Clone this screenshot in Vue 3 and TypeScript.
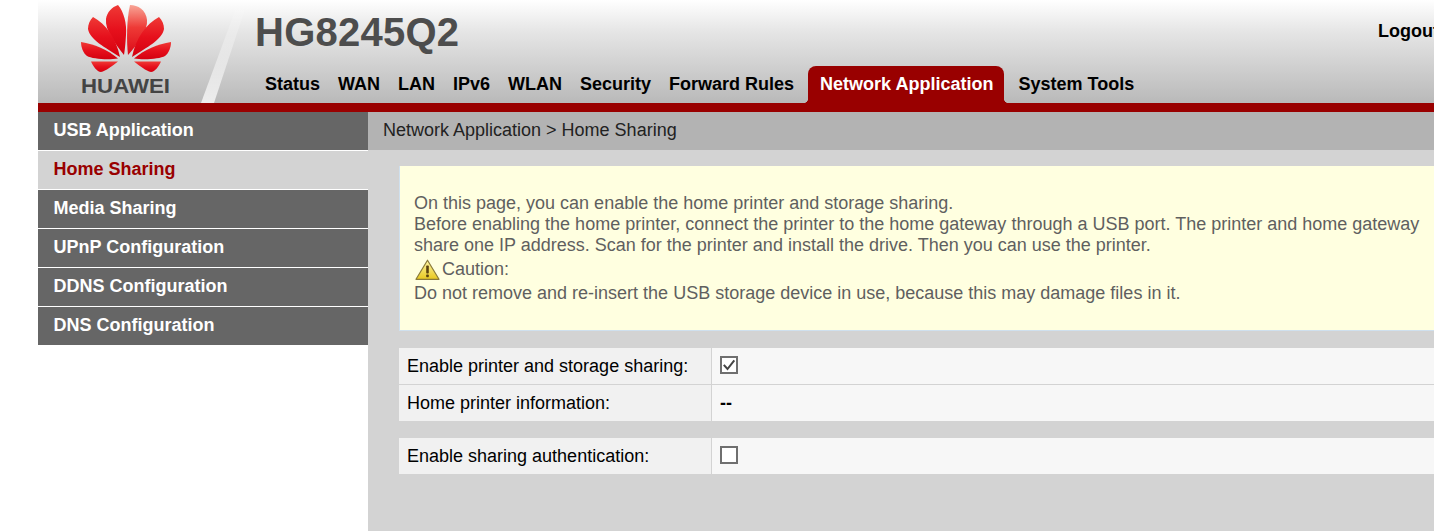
<script setup lang="ts">
const tabs: string[] = ['Status', 'WAN', 'LAN', 'IPv6', 'WLAN', 'Security', 'Forward Rules', 'Network Application', 'System Tools']
const menu: string[] = ['USB Application', 'Home Sharing', 'Media Sharing', 'UPnP Configuration', 'DDNS Configuration', 'DNS Configuration']
const activeTab = 'Network Application'
const activeMenu = 'Home Sharing'
</script>

<template>
  <div class="page">
    <header class="header">
      <svg class="slash" width="60" height="103" viewBox="0 0 60 103" aria-hidden="true">
        <defs>
          <linearGradient id="slashFill" x1="0" y1="1" x2="0" y2="0">
            <stop offset="0" stop-color="#fff" stop-opacity="0.75" />
            <stop offset="1" stop-color="#fff" stop-opacity="0" />
          </linearGradient>
        </defs>
        <polygon points="0,103 13,103 47,0 38,0" fill="url(#slashFill)" />
      </svg>
      <div class="logo">
        <svg width="110" height="103" viewBox="70 0 110 103" aria-label="HUAWEI">
          <defs>
            <linearGradient id="petal" x1="0" y1="0" x2="0" y2="1">
              <stop offset="0" stop-color="#ef3a36" />
              <stop offset="0.5" stop-color="#e6101c" />
              <stop offset="1" stop-color="#d4000f" />
            </linearGradient>
            <linearGradient id="petalTop" x1="0" y1="0" x2="0" y2="1">
              <stop offset="0" stop-color="#f8a596" />
              <stop offset="0.45" stop-color="#ee3a36" />
              <stop offset="1" stop-color="#dc0a18" />
            </linearGradient>
          </defs>
          <path d="M124 55 C114 42 105 30 106 19 C107 12 112 7 118 5 C124 12 127 24 126 35 C125.500 43 125 49 124 55Z" fill="url(#petal)" />
          <path d="M128 55 C126.500 42 126.500 20 130 5 C138 5 146 10 147 20 C148 30 138 44 128 55Z" fill="url(#petalTop)" />
          <path d="M120 57 C105 47 90 40 88 29 C88 24 90 20 93 17 C106 24 116 38 120 57Z" fill="url(#petal)" />
          <path d="M132 57 C136 38 146 24 159 17 C162 20 164 24 164 29 C162 40 147 47 132 57Z" fill="url(#petal)" />
          <path d="M118 58.500 C108 60 92 59 87 56 C83 53 81 47 81 42 C94 44 108 50 118 58.500Z" fill="url(#petal)" />
          <path d="M134 58.500 C144 60 160 59 165 56 C169 53 171 47 171 42 C158 44 144 50 134 58.500Z" fill="url(#petal)" />
          <path d="M91 61.500 H118 C112 66 106 71 101 72 C97 72 93 66 91 61.500Z" fill="url(#petal)" />
          <path d="M134 61.500 H161 C159 66 155 72 151 72 C146 71 140 66 134 61.500Z" fill="url(#petal)" />
          <text class="brand" x="81" y="93" textLength="89" lengthAdjust="spacingAndGlyphs">HUAWEI</text>
        </svg>
      </div>
      <div class="head-main">
        <div class="title-row">
          <h1 class="model">HG8245Q2</h1>
          <a class="logout">Logout</a>
        </div>
        <nav class="tabs">
          <a v-for="tab in tabs" :key="tab" class="tab" :class="{ 'tab-active': tab === activeTab }">{{ tab }}</a>
        </nav>
      </div>
    </header>
    <div class="redbar"></div>
    <div class="body">
      <aside class="side">
        <a v-for="item in menu" :key="item" class="side-item" :class="{ 'side-active': item === activeMenu }">{{ item }}</a>
      </aside>
      <main class="content">
        <div class="crumb">Network Application &gt; Home Sharing</div>
        <div class="panel">
          <section class="notice">
            <p>On this page, you can enable the home printer and storage sharing.</p>
            <p>Before enabling the home printer, connect the printer to the home gateway through a USB port. The printer and home gateway share one IP address. Scan for the printer and install the drive. Then you can use the printer.</p>
            <div class="caution">
              <svg width="25" height="22" viewBox="0 0 25 22" aria-hidden="true">
                <defs>
                  <linearGradient id="warn" x1="0" y1="0" x2="0" y2="1">
                    <stop offset="0" stop-color="#fff6a8" />
                    <stop offset="1" stop-color="#e8c81e" />
                  </linearGradient>
                </defs>
                <path d="M12.500 1.200 L24 20.300 H1 Z" fill="url(#warn)" stroke="#8a7a3a" stroke-width="1.200" stroke-linejoin="round" />
                <rect x="11.200" y="6.500" width="2.600" height="8" rx="0.800" fill="#5a4210" />
                <rect x="11.200" y="15.600" width="2.600" height="2.600" rx="0.600" fill="#5a4210" />
              </svg>
              <span>Caution:</span>
            </div>
            <p>Do not remove and re-insert the USB storage device in use, because this may damage files in it.</p>
          </section>
          <div class="form-table">
            <div class="row">
              <div class="label">Enable printer and storage sharing:</div>
              <div class="value">
                <span class="check">
                  <svg width="14" height="14" viewBox="0 0 14 14" aria-hidden="true"><path d="M1.800 6.800 L5.500 11 L12.300 2.300" fill="none" stroke="#444" stroke-width="2" /></svg>
                </span>
              </div>
            </div>
            <div class="row">
              <div class="label">Home printer information:</div>
              <div class="value dash">--</div>
            </div>
          </div>
          <div class="form-table">
            <div class="row">
              <div class="label">Enable sharing authentication:</div>
              <div class="value"><span class="check"></span></div>
            </div>
          </div>
        </div>
      </main>
    </div>
  </div>
</template>

<style scoped>
.page {
  width: 1480px;
  min-height: 531px;
  box-sizing: border-box;
  padding-left: 38px;
  display: flex;
  flex-direction: column;
  background: #fff;
  font-family: "Liberation Sans", Arial, sans-serif;
  font-size: 18px;
  color: #000;
}
.header {
  position: relative;
  height: 103px;
  display: flex;
  background: linear-gradient(#fff 0%, #e6e6e6 30%, #b9b9b9 100%);
}
.slash {
  position: absolute;
  left: 163px;
  top: 0;
}
.logo {
  width: 217px;
  padding-left: 32px;
  box-sizing: border-box;
  flex: none;
}
.logo svg { display: block; }
.brand {
  font-family: "Liberation Sans", Arial, sans-serif;
  font-size: 19.500px;
  font-weight: bold;
  fill: #444;
}
.head-main {
  flex: 1;
  display: flex;
  flex-direction: column;
  min-width: 0;
}
.title-row {
  height: 66px;
  display: flex;
  justify-content: space-between;
  padding-right: 41px;
}
.model {
  margin: 9px 0 0;
  font-size: 40px;
  letter-spacing: 0.250px;
  line-height: 46px;
  font-weight: bold;
  color: #4d4d4d;
}
.logout {
  margin-top: 21px;
  font-weight: bold;
  line-height: 21px;
}
.tabs {
  height: 37px;
  display: flex;
  gap: 18px;
  padding-left: 10px;
}
.tab {
  font-weight: bold;
  line-height: 36px;
  white-space: nowrap;
}
.tab-active {
  position: relative;
  margin: 0 -4px;
  padding: 0 11px 0 12px;
  color: #fff;
  background: #990000;
  border-radius: 8px 8px 0 0;
}
.tab-active::before,
.tab-active::after {
  content: "";
  position: absolute;
  bottom: 0;
  width: 5px;
  height: 5px;
}
.tab-active::before {
  left: -5px;
  background: radial-gradient(circle at 0 0, transparent 5px, #990000 5.500px);
}
.tab-active::after {
  right: -5px;
  background: radial-gradient(circle at 100% 0, transparent 5px, #990000 5.500px);
}
.redbar {
  height: 9px;
  background: #990000;
}
.body {
  flex: 1;
  display: flex;
}
.side {
  width: 330px;
  flex: none;
  display: flex;
  flex-direction: column;
  background: #fff;
}
.side-item {
  height: 38px;
  line-height: 36px;
  padding-left: 15.500px;
  margin-bottom: 1px;
  font-weight: bold;
  color: #fff;
  background: #666;
}
.side-active {
  color: #990000;
  background: #d3d3d3;
}
.content {
  flex: 1;
  min-width: 0;
  background: #d3d3d3;
}
.crumb {
  height: 38px;
  line-height: 36px;
  padding-left: 15px;
  background: #b3b3b3;
  color: #222;
}
.panel {
  padding: 16px 0 0 31px;
}
.notice {
  box-sizing: border-box;
  height: 165px;
  padding: 27px 15px 0 14px;
  line-height: 21px;
  color: #5f5f5f;
  background: #ffffe0;
  border-left: 1px solid #cfe0ee;
  border-bottom: 1px solid #cfe0ee;
}
.notice p { margin: 0; }
.caution {
  display: flex;
  align-items: center;
  gap: 2px;
  height: 27px;
  line-height: 27px;
}
.caution svg { margin: 0 0 0 1px; }
.form-table {
  margin-top: 17px;
  display: flex;
  flex-direction: column;
  gap: 1px;
}
.row {
  display: flex;
  height: 36px;
  line-height: 37px;
}
.label {
  width: 313px;
  box-sizing: border-box;
  flex: none;
  padding-left: 8px;
  background: #f1f1f1;
  border-right: 1px solid #d3d3d3;
}
.value {
  flex: 1;
  display: flex;
  align-items: center;
  padding-left: 8px;
  background: #f7f7f7;
}
.dash {
  font-weight: bold;
  box-sizing: border-box;
}
.check {
  box-sizing: border-box;
  width: 18px;
  height: 18px;
  margin-bottom: 2px;
  border: 2px solid #6f6f6f;
  background: #fff;
  display: flex;
  align-items: center;
  justify-content: center;
}
</style>

<style>
html, body {
  margin: 0;
  overflow: hidden;
  background: #fff;
}
</style>
